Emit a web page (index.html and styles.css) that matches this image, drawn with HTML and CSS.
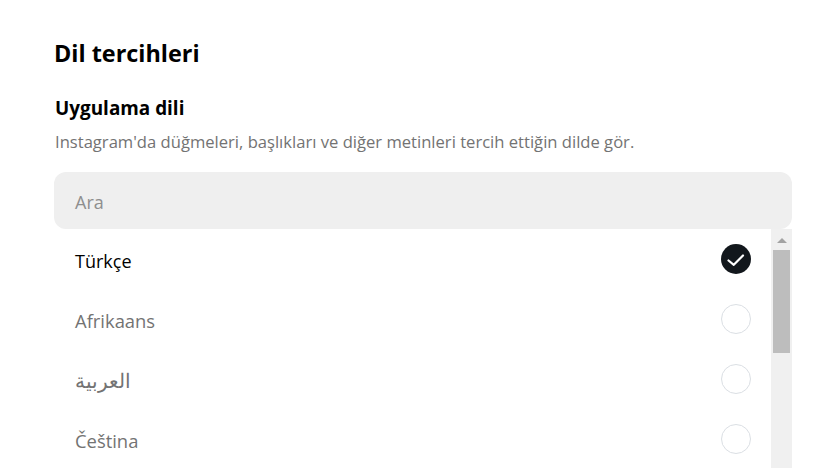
FILE: index.html
```html
<!DOCTYPE html>
<html lang="tr">
<head>
    <meta charset="UTF-8">
    <meta name="viewport" content="width=device-width, initial-scale=1.0">
    <title>Dil tercihleri</title>
    <link rel="stylesheet" href="styles.css">
</head>
<body>
    <div class="page">
        <h1>Dil tercihleri</h1>
        <h2>Uygulama dili</h2>
        <p class="hint">Instagram'da düğmeleri, başlıkları ve diğer metinleri tercih ettiğin dilde gör.</p>
        <div class="search">Ara</div>
        <div class="list-wrap">
            <div class="list">
                <div class="row selected">
                    <span class="label">Türkçe</span>
                    <span class="radio radio-on">
                        <svg width="30" height="30" viewBox="0 0 30 30"><path d="M7.5 16.5l5.3 4.3 9.2-9.3" fill="none" stroke="#fff" stroke-width="2.2" stroke-linecap="round" stroke-linejoin="round"/></svg>
                    </span>
                </div>
                <div class="row"><span class="label">Afrikaans</span><span class="radio"></span></div>
                <div class="row"><span class="label arabic" lang="ar">العربية</span><span class="radio"></span></div>
                <div class="row"><span class="label">Čeština</span><span class="radio"></span></div>
            </div>
            <div class="scrollbar">
                <div class="arrow"></div>
                <div class="thumb"></div>
            </div>
        </div>
    </div>
</body>
</html>
```

FILE: styles.css
```css
html, body {
    height: 100%;
    margin: 0;
    overflow: hidden;
}
body {
    font-family: "Open Sans", "Noto Sans", Arial, sans-serif;
    background: #fff;
    color: #000;
}
.page {
    padding: 38px 35px 0 55px;
}
h1 {
    font-size: 23.4px;
    line-height: 30px;
    font-weight: 700;
    margin: 0 0 28px -1px;
}
h2 {
    font-size: 18.9px;
    line-height: 24px;
    font-weight: 700;
    margin: 0 0 11px;
}
.hint {
    font-size: 16.6px;
    line-height: 22px;
    color: #737373;
    margin: 0 0 19px;
}
.search {
    height: 57px;
    line-height: 60px;
    margin-left: -1px;
    padding-left: 21px;
    font-size: 18px;
    color: #8e8e8e;
    background: #efefef;
    border-radius: 12px;
}
.list-wrap {
    display: flex;
}
.list {
    flex: 1;
}
.row {
    display: flex;
    justify-content: space-between;
    align-items: center;
    height: 60px;
    padding: 0 20px;
    font-size: 18.4px;
    color: #737373;
}
.label {
    margin-top: 2px;
}
.row.selected {
    color: #000;
    font-size: 18px;
}
.row.selected .label {
    margin-top: 4px;
}
.arabic {
    font-size: 20px;
}
.radio {
    width: 30px;
    height: 30px;
    box-sizing: border-box;
    border: 1px solid #dbdfe4;
    border-radius: 50%;
}
.radio-on {
    background: #12171c;
    border: 0;
}
.radio-on svg {
    display: block;
}
.scrollbar {
    width: 21px;
    background: #f0f0f0;
    padding: 0 2px;
    box-sizing: border-box;
}
.arrow {
    width: 0;
    margin: 9px auto 0;
    border-left: 5px solid transparent;
    border-right: 5px solid transparent;
    border-bottom: 5px solid #a3a3a3;
}
.thumb {
    height: 103px;
    margin-top: 7px;
    background: #bdbdbd;
}
```
